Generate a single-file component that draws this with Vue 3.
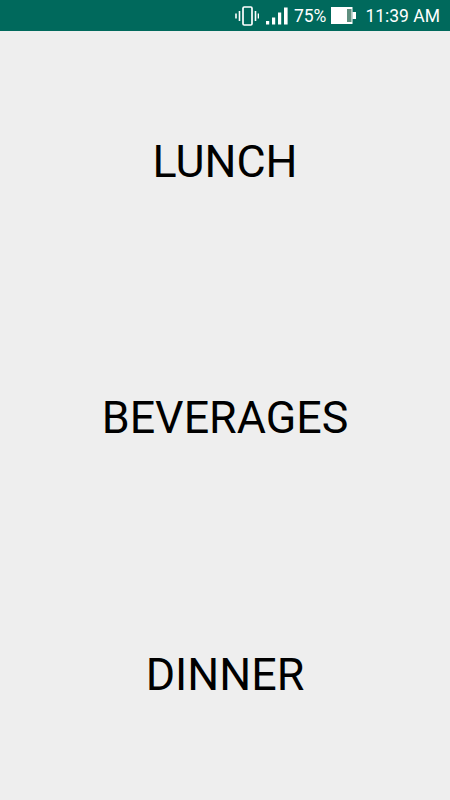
<template>
  <div class="screen">
    <div class="status-bar">
      <svg class="icon-vibrate" width="24" height="20" viewBox="0 0 24 20">
        <rect x="8" y="1" width="9" height="18" rx="1.2" fill="none" stroke="#fff" stroke-width="1.7" />
        <path d="M4.5 5v10M1 7.5v5M20.5 5v10M23.5 7.5v5" stroke="#fff" stroke-width="1.6" fill="none" />
      </svg>
      <svg class="icon-signal" width="22" height="18" viewBox="0 0 22 18">
        <rect x="0" y="14" width="3.2" height="3.5" fill="#fff" />
        <rect x="6" y="10.5" width="3.2" height="7" fill="#fff" />
        <rect x="12" y="5.5" width="3.2" height="12" fill="#fff" />
        <rect x="18" y="0.5" width="3.6" height="17" fill="#fff" />
      </svg>
      <span class="percent">75%</span>
      <svg class="icon-battery" width="25" height="17" viewBox="0 0 25 17">
        <rect x="0" y="0" width="21.5" height="17" fill="#fff" />
        <rect x="16" y="2" width="4.5" height="13" fill="#5f8f7f" />
        <rect x="21.5" y="5" width="3.5" height="7" fill="#fff" />
      </svg>
      <span class="time">11:39 AM</span>
    </div>
    <div class="menu">
      <div v-for="item in items" :key="item" class="menu-item">{{ item }}</div>
    </div>
  </div>
</template>

<script setup>
const items = ['LUNCH', 'BEVERAGES', 'DINNER'];
</script>

<style>
html,
body {
  margin: 0;
  background: #eeeeee;
}
</style>

<style scoped>
.screen {
  width: 450px;
  height: 800px;
  display: flex;
  flex-direction: column;
  background: #eeeeee;
  font-family: Roboto, sans-serif;
  overflow: hidden;
}

.status-bar {
  height: 31px;
  flex-shrink: 0;
  display: flex;
  align-items: center;
  justify-content: flex-end;
  padding-right: 10px;
  background: #00695c;
  color: #fff;
  font-size: 17.5px;
}

.icon-vibrate {
  margin-right: 7px;
}

.percent {
  margin-left: 6px;
}

.icon-battery {
  margin-left: 5px;
}

.time {
  margin-left: 9px;
}

.menu {
  flex: 1;
  display: flex;
  flex-direction: column;
}

.menu-item {
  flex: 1;
  display: flex;
  align-items: center;
  justify-content: center;
  font-size: 44.8px;
  color: #000;
  padding-top: 5px;
}
</style>
